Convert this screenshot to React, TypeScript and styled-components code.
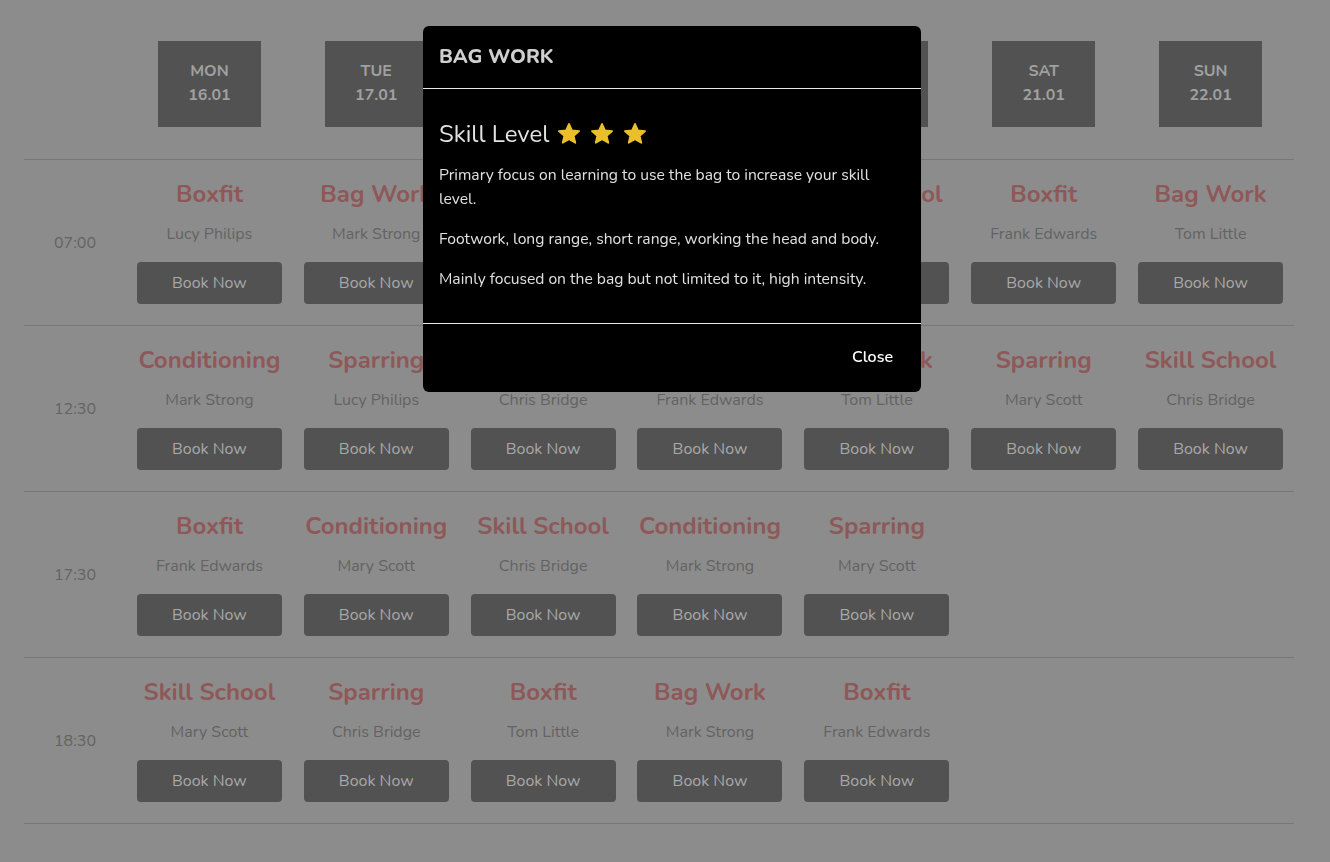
import React from "react";
import styled, { createGlobalStyle } from "styled-components";

const Global = createGlobalStyle`
  html, body { margin: 0; padding: 0; }
  body {
    background: #8c8c8c;
    font-family: "Nunito", "Lato", "Open Sans", sans-serif;
  }
`;

type Session = { title: string; coach: string } | null;

const days = [
  ["MON", "16.01"],
  ["TUE", "17.01"],
  ["WED", "18.01"],
  ["THU", "19.01"],
  ["FRI", "20.01"],
  ["SAT", "21.01"],
  ["SUN", "22.01"],
];

const rows: { time: string; sessions: Session[] }[] = [
  {
    time: "07:00",
    sessions: [
      { title: "Boxfit", coach: "Lucy Philips" },
      { title: "Bag Work", coach: "Mark Strong" },
      { title: "Sparring", coach: "Chris Bridge" },
      { title: "Conditioning", coach: "Mary Scott" },
      { title: "Skill School", coach: "Chris Bridge" },
      { title: "Boxfit", coach: "Frank Edwards" },
      { title: "Bag Work", coach: "Tom Little" },
    ],
  },
  {
    time: "12:30",
    sessions: [
      { title: "Conditioning", coach: "Mark Strong" },
      { title: "Sparring", coach: "Lucy Philips" },
      { title: "Boxfit", coach: "Chris Bridge" },
      { title: "Skill School", coach: "Frank Edwards" },
      { title: "Bag Work", coach: "Tom Little" },
      { title: "Sparring", coach: "Mary Scott" },
      { title: "Skill School", coach: "Chris Bridge" },
    ],
  },
  {
    time: "17:30",
    sessions: [
      { title: "Boxfit", coach: "Frank Edwards" },
      { title: "Conditioning", coach: "Mary Scott" },
      { title: "Skill School", coach: "Chris Bridge" },
      { title: "Conditioning", coach: "Mark Strong" },
      { title: "Sparring", coach: "Mary Scott" },
      null,
      null,
    ],
  },
  {
    time: "18:30",
    sessions: [
      { title: "Skill School", coach: "Mary Scott" },
      { title: "Sparring", coach: "Chris Bridge" },
      { title: "Boxfit", coach: "Tom Little" },
      { title: "Bag Work", coach: "Mark Strong" },
      { title: "Boxfit", coach: "Frank Edwards" },
      null,
      null,
    ],
  },
];

const Page = styled.div`
  padding: 41px 36px 40px 24px;
`;

const Grid = styled.div`
  display: grid;
  grid-template-columns: 102px repeat(7, 1fr);
`;

const HeaderCell = styled.div`
  display: flex;
  justify-content: center;
  padding-bottom: 32px;
`;

const DayBox = styled.div`
  width: 103px;
  height: 86px;
  background: #525252;
  color: #a0a0a0;
  font-weight: 700;
  font-size: 16px;
  line-height: 24px;
  display: flex;
  flex-direction: column;
  align-items: center;
  padding-top: 18px;
  box-sizing: border-box;
`;

const Row = styled.div`
  grid-column: 1 / -1;
  display: grid;
  grid-template-columns: 102px repeat(7, 1fr);
  border-top: 1px solid #777;
  &:last-child {
    border-bottom: 1px solid #777;
  }
`;

const Time = styled.div`
  display: flex;
  align-items: center;
  justify-content: center;
  color: #636363;
  font-size: 16px;
`;

const Cell = styled.div`
  display: flex;
  flex-direction: column;
  align-items: center;
  padding: 20px 0 20px;
  height: 165px;
  box-sizing: border-box;
`;

const ClassTitle = styled.div`
  color: #8f5858;
  font-weight: 700;
  font-size: 24px;
  line-height: 28px;
  white-space: nowrap;
`;

const Coach = styled.div`
  color: #636363;
  font-size: 16px;
  line-height: 24px;
  margin-top: 14px;
`;

const BookButton = styled.button`
  margin-top: 16px;
  width: 145px;
  height: 42px;
  border: none;
  border-radius: 4px;
  background: #525252;
  color: #a8a8a8;
  font-family: inherit;
  font-size: 16px;
`;

const Backdrop = styled.div`
  position: fixed;
  inset: 0;
`;

const Modal = styled.div`
  position: absolute;
  left: 423px;
  top: 26px;
  width: 498px;
  background: #000;
  border-radius: 6px;
  overflow: hidden;
`;

const ModalHeader = styled.div`
  padding: 16px;
  border-bottom: 1px solid #e8e8e8;
`;

const ModalTitle = styled.h5`
  margin: 0;
  font-size: 20px;
  line-height: 30px;
  font-weight: 800;
  color: #cfcfcf;
`;

const ModalBody = styled.div`
  padding: 16px;
`;

const SkillHeading = styled.h3`
  margin: 14px 0 14px;
  font-size: 24px;
  line-height: 30px;
  font-weight: 400;
  color: #e2e2e2;
  display: flex;
  align-items: center;
  gap: 7px;
`;

const Stars = styled.span`
  display: inline-flex;
  gap: 7px;
`;

const Paragraph = styled.p`
  margin: 0 0 16px;
  font-size: 15.65px;
  line-height: 24px;
  color: #e0e0e0;
`;

const ModalFooter = styled.div`
  border-top: 1px solid #e8e8e8;
  padding: 12px 16px 14px;
  display: flex;
  justify-content: flex-end;
`;

const CloseButton = styled.button`
  height: 42px;
  padding: 0 12px;
  background: transparent;
  border: none;
  color: #fff;
  font-family: inherit;
  font-size: 16px;
  font-weight: 600;
`;

const Star = () => (
  <svg width="26" height="26" viewBox="0 0 24 24">
    <path
      d="M12 2.6l2.75 6.05 6.6.62-4.98 4.4 1.45 6.5L12 16.8l-5.82 3.37 1.45-6.5-4.98-4.4 6.6-.62z"
      fill="#ebbe2c"
      stroke="#ebbe2c"
      strokeWidth="1.6"
      strokeLinejoin="round"
    />
  </svg>
);

export default function App() {
  return (
    <>
      <Global />
      <Page>
        <Grid>
          <div />
          {days.map(([d, date]) => (
            <HeaderCell key={d}>
              <DayBox>
                <span>{d}</span>
                <span>{date}</span>
              </DayBox>
            </HeaderCell>
          ))}
          {rows.map((r) => (
            <Row key={r.time}>
              <Time>{r.time}</Time>
              {r.sessions.map((s, i) =>
                s ? (
                  <Cell key={i}>
                    <ClassTitle>{s.title}</ClassTitle>
                    <Coach>{s.coach}</Coach>
                    <BookButton>Book Now</BookButton>
                  </Cell>
                ) : (
                  <Cell key={i} />
                )
              )}
            </Row>
          ))}
        </Grid>
      </Page>
      <Backdrop>
        <Modal>
          <ModalHeader>
            <ModalTitle>BAG WORK</ModalTitle>
          </ModalHeader>
          <ModalBody>
            <SkillHeading>
              Skill Level
              <Stars>
                <Star />
                <Star />
                <Star />
              </Stars>
            </SkillHeading>
            <Paragraph>
              Primary focus on learning to use the bag to increase your skill
              level.
            </Paragraph>
            <Paragraph>
              Footwork, long range, short range, working the head and body.
            </Paragraph>
            <Paragraph>
              Mainly focused on the bag but not limited to it, high intensity.
            </Paragraph>
          </ModalBody>
          <ModalFooter>
            <CloseButton>Close</CloseButton>
          </ModalFooter>
        </Modal>
      </Backdrop>
    </>
  );
}
